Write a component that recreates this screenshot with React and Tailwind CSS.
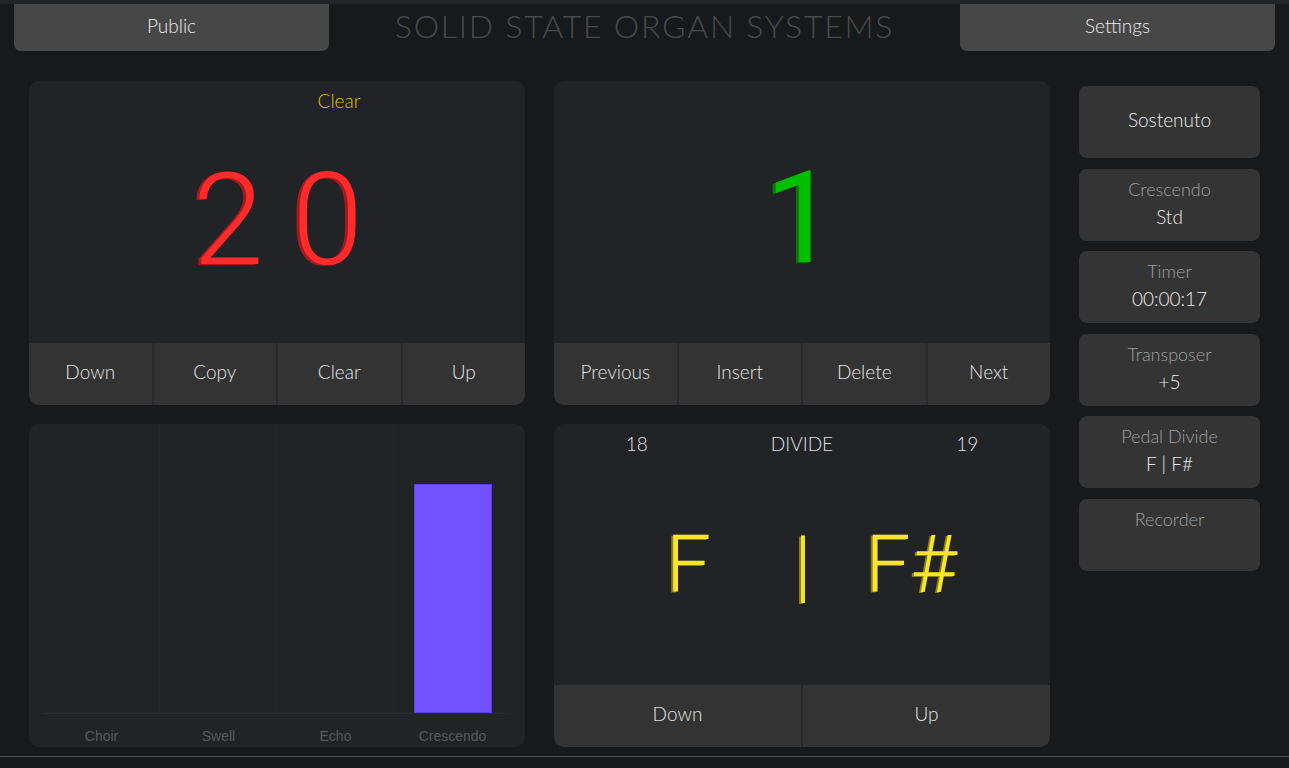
const ui = { fontFamily: "Lato, 'Open Sans', sans-serif" };
const digits = { fontFamily: "Roboto, 'Liberation Sans', Arial, sans-serif" };

function HeaderButton({ label }) {
  return (
    <button className="w-[315px] h-[47px] rounded-b-[7px] bg-[#474747] pb-[2px] text-[19px] font-light text-[#ececec] flex items-center justify-center">
      {label}
    </button>
  );
}

function ButtonRow({ labels }) {
  return (
    <div className="flex gap-[2px] h-[62px] bg-[#27292c]">
      {labels.map((l) => (
        <button
          key={l}
          className="flex-1 bg-[#333333] pb-[4px] text-[19px] font-light text-[#e4e4e4] flex items-center justify-center"
        >
          {l}
        </button>
      ))}
    </div>
  );
}

function Panel({ children }) {
  return (
    <div className="bg-[#212327] rounded-[10px] overflow-hidden flex flex-col">
      {children}
    </div>
  );
}

function SideCard({ label, value, bright }) {
  return (
    <div className="h-[72px] rounded-[8px] bg-[#343434] flex flex-col items-center pt-[7px] font-light">
      {bright ? (
        <div className="flex-1 flex items-center pb-[11px] text-[19px] text-[#ececec]">{label}</div>
      ) : (
        <>
          <div className="h-[27px] leading-[27px] text-[18px] text-[#a0a0a0]">{label}</div>
          <div className="h-[28px] leading-[28px] text-[19px] text-[#ececec]">{value}</div>
        </>
      )}
    </div>
  );
}

export default function App() {
  const bars = [
    { name: "Choir", value: 0 },
    { name: "Swell", value: 0 },
    { name: "Echo", value: 0 },
    { name: "Crescendo", value: 229 },
  ];

  return (
    <div className="w-[1289px] h-[768px] bg-[#17191b] flex flex-col overflow-hidden" style={ui}>
      {/* top strip */}
      <div className="h-[4px] bg-[#212428]" />

      {/* header */}
      <div className="flex items-start justify-between px-[14px] h-[47px]">
        <HeaderButton label="Public" />
        <div className="flex-1 h-[47px] flex items-center justify-center pb-[4px] text-[32px] font-light text-[#4a4a4a] tracking-[0.055em]">
          SOLID STATE ORGAN SYSTEMS
        </div>
        <HeaderButton label="Settings" />
      </div>

      {/* main */}
      <div className="flex gap-[29px] px-[29px] pt-[30px]">
        <div className="grid grid-cols-[496px_496px] grid-rows-[324px_323px] gap-x-[29px] gap-y-[19px]">
          {/* counter panel */}
          <Panel>
            <div className="flex-1 relative flex flex-col">
              <div className="pt-[6px] pl-[124px] text-center text-[19px] font-light text-[#e2c000]">Clear</div>
              <div
                className="flex-1 flex items-center justify-center pb-[18px] pl-[30px] text-[128px] font-light leading-none tracking-[0.22em] text-[#ff2a2a] [text-shadow:-3px_1px_0_#a8181b]"
                style={digits}
              >
                20
              </div>
            </div>
            <ButtonRow labels={["Down", "Copy", "Clear", "Up"]} />
          </Panel>

          {/* sequence panel */}
          <Panel>
            <div
              className="flex-1 flex items-center justify-center pt-[12px] pr-[2px] text-[128px] leading-none text-[#00bf00] [text-shadow:-3px_1px_0_#007d00]"
              style={digits}
            >
              1
            </div>
            <ButtonRow labels={["Previous", "Insert", "Delete", "Next"]} />
          </Panel>

          {/* bar chart */}
          <Panel>
            <div className="flex-1 flex flex-col px-[14px]">
              <div className="h-[290px] grid grid-cols-4 border-b border-[#2a2c30]">
                {bars.map((b, i) => (
                  <div
                    key={b.name}
                    className={
                      "flex items-end justify-center " +
                      (i < 3 ? "border-r border-[#25272b]" : "")
                    }
                  >
                    {b.value > 0 && (
                      <div
                        className="w-[78px] bg-[#7252ff] border border-[#5b40d2]"
                        style={{ height: b.value }}
                      />
                    )}
                  </div>
                ))}
              </div>
              <div
                className="grid grid-cols-4 pt-[12px] text-[14px] text-[#585a5c]"
                style={{ fontFamily: "'Liberation Sans', Arial, sans-serif" }}
              >
                {bars.map((b) => (
                  <div key={b.name} className="text-center">
                    {b.name}
                  </div>
                ))}
              </div>
            </div>
          </Panel>

          {/* pedal divide */}
          <Panel>
            <div className="grid grid-cols-3 pt-[6px] text-[19px] font-light text-[#e0e0e0]">
              <div className="text-center">18</div>
              <div className="text-center">DIVIDE</div>
              <div className="text-center">19</div>
            </div>
            <div
              className="flex-1 flex items-center justify-center pl-[19px] pb-[14px] text-[80px] font-light leading-none text-[#f6e42e] [text-shadow:-2px_1px_0_#8f7f0c]"
              style={digits}
            >
              <span>F</span>
              <span className="ml-[83px]">|</span>
              <span className="ml-[54px]">F#</span>
            </div>
            <ButtonRow labels={["Down", "Up"]} />
          </Panel>
        </div>

        {/* side column */}
        <div className="w-[181px] pt-[5px] flex flex-col gap-[10.6px]">
          <SideCard label="Sostenuto" bright />
          <SideCard label="Crescendo" value="Std" />
          <SideCard label="Timer" value="00:00:17" />
          <SideCard label="Transposer" value="+5" />
          <SideCard label="Pedal Divide" value="F | F#" />
          <SideCard label="Recorder" value="" />
        </div>
      </div>

      {/* footer */}
      <div className="mt-auto h-[12px] border-t border-[#505254] bg-[#17191b]" />
    </div>
  );
}
